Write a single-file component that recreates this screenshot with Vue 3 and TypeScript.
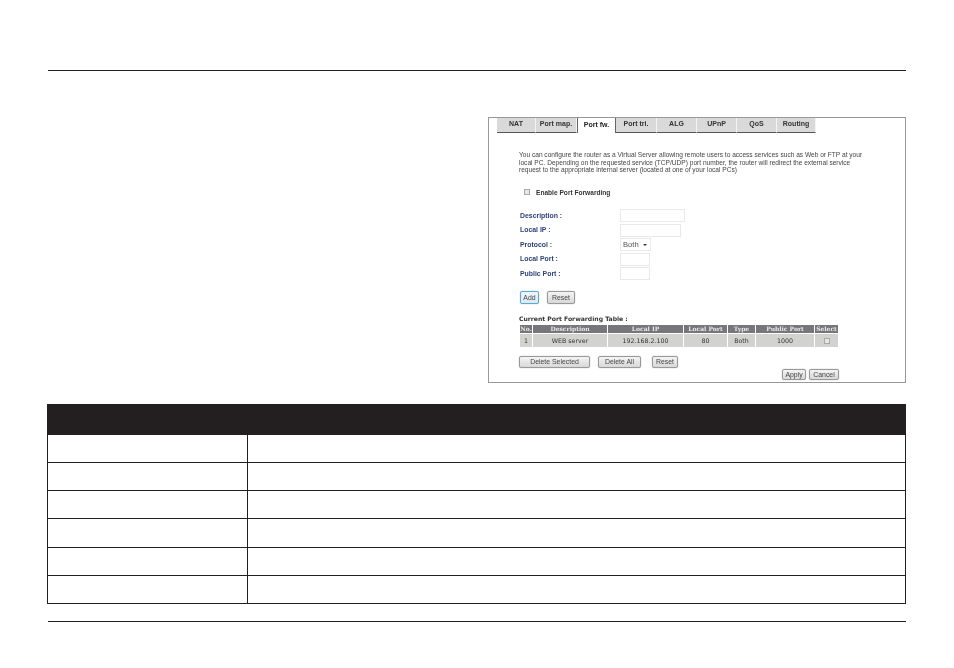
<script setup lang="ts">
const tabs: { label: string; width: number; active?: boolean }[] = [
  { label: 'NAT', width: 39 },
  { label: 'Port map.', width: 41 },
  { label: 'Port fw.', width: 39, active: true },
  { label: 'Port tri.', width: 41 },
  { label: 'ALG', width: 40 },
  { label: 'UPnP', width: 40 },
  { label: 'QoS', width: 40 },
  { label: 'Routing', width: 39 },
]
const fields = [
  { label: 'Description :', width: 65 },
  { label: 'Local IP :', width: 61 },
  { label: 'Protocol :', width: 0 },
  { label: 'Local Port :', width: 30 },
  { label: 'Public Port :', width: 30 },
]
const heads = ['No.', 'Description', 'Local IP', 'Local Port', 'Type', 'Public Port', 'Select']
const cells = ['1', 'WEB server', '192.168.2.100', '80', 'Both', '1000']
const specRows = [0, 1, 2, 3, 4, 5]
</script>

<template>
  <div class="page">
    <hr class="rule top-rule" />

    <div class="figure-row">
      <section class="shot">
        <div class="shot-inner">
          <nav class="tabs">
            <div
              v-for="t in tabs"
              :key="t.label"
              class="tab"
              :class="{ active: t.active }"
              :style="{ width: t.width + 'px' }"
            >{{ t.label }}</div>
          </nav>

          <p class="intro">You can configure the router as a Virtual Server allowing remote users to access services such as Web or FTP at your<br />local PC. Depending on the requested service (TCP/UDP) port number, the router will redirect the external service<br />request to the appropriate internal server (located at one of your local PCs)</p>

          <div class="enable">
            <span class="check"></span>
            <span class="enable-label">Enable Port Forwarding</span>
          </div>

          <div class="form">
            <div v-for="f in fields" :key="f.label" class="field">
              <span class="field-label">{{ f.label }}</span>
              <span v-if="f.width" class="input" :style="{ width: f.width + 'px' }"></span>
              <span v-else class="input select">Both<i class="caret"></i></span>
            </div>
          </div>

          <div class="form-buttons">
            <span class="btn add">Add</span>
            <span class="btn reset">Reset</span>
          </div>

          <h4 class="table-title">Current Port Forwarding Table :</h4>
          <table class="pf">
            <thead>
              <tr><th v-for="h in heads" :key="h">{{ h }}</th></tr>
            </thead>
            <tbody>
              <tr>
                <td v-for="c in cells" :key="c">{{ c }}</td>
                <td><span class="check small"></span></td>
              </tr>
            </tbody>
          </table>

          <div class="table-buttons">
            <span class="btn del-sel">Delete Selected</span>
            <span class="btn del-all">Delete All</span>
            <span class="btn reset2">Reset</span>
          </div>
          <div class="apply-row">
            <span class="btn apply">Apply</span>
            <span class="btn cancel">Cancel</span>
          </div>
        </div>
      </section>
    </div>

    <div class="spec">
      <div class="spec-head"></div>
      <div v-for="r in specRows" :key="r" class="spec-row">
        <div class="spec-key"></div>
        <div class="spec-val"></div>
      </div>
    </div>

    <hr class="rule bottom-rule" />
  </div>
</template>

<style scoped>
.page {
  width: 954px;
  height: 668px;
  overflow: hidden;
  padding-top: 70px;
  box-sizing: border-box;
  background: #fff;
  font-family: "Liberation Sans", Arial, sans-serif;
}
.rule {
  border: 0;
  height: 1px;
  margin: 0 48px;
  background: #231f20;
}
.figure-row {
  display: flex;
  justify-content: flex-end;
  padding: 46px 48px 0 0;
}
.shot {
  width: 418px;
  height: 266px;
  box-sizing: border-box;
  border: 1px solid #999;
  background: #fff;
  overflow: hidden;
}
.shot-inner {
  filter: blur(0.45px);
  height: 100%;
  color: #3a3a3a;
}
.tabs {
  display: flex;
  margin-left: 8px;
  height: 15px;
}
.tab {
  box-sizing: border-box;
  height: 15px;
  background: #d9d9d9;
  border-bottom: 1px solid #555;
  border-right: 1px solid #f4f4f4;
  font-size: 7px;
  font-weight: 700;
  color: #333;
  text-align: center;
  line-height: 11px;
}
.tab.active {
  height: 15px;
  background: #fff;
  border-bottom: 0;
  border-left: 1px solid #666;
  border-right: 1px solid #666;
  color: #222;
  line-height: 13px;
}
.intro {
  margin: 18px 0 0 30px;
  font-size: 6.58px;
  line-height: 7.6px;
  white-space: nowrap;
  color: #444;
}
.enable {
  display: flex;
  align-items: center;
  margin: 14.5px 0 0 35px;
  height: 8px;
}
.check {
  display: inline-block;
  box-sizing: border-box;
  width: 6px;
  height: 6px;
  border: 1px solid #aaa;
  background: #e6e6e6;
}
.check.small {
  vertical-align: middle;
}
.enable-label {
  margin-left: 6px;
  font-size: 6.6px;
  font-weight: 700;
  color: #333;
  white-space: nowrap;
}
.form {
  margin: 12.5px 0 0 31px;
}
.field {
  display: flex;
  align-items: center;
  height: 14.4px;
}
.field-label {
  width: 100px;
  padding-bottom: 1px;
  font-size: 6.9px;
  font-weight: 700;
  color: #2c3f78;
}
.input {
  box-sizing: border-box;
  height: 13px;
  border: 1px solid #e9e9e9;
  background: #fff;
}
.select {
  width: 31px;
  padding-left: 2px;
  font-size: 7.6px;
  line-height: 11px;
  color: #555;
  display: flex;
  align-items: center;
  gap: 4px;
}
.caret {
  width: 0;
  height: 0;
  border-left: 2px solid transparent;
  border-right: 2px solid transparent;
  border-top: 2px solid #333;
}
.form-buttons {
  display: flex;
  gap: 8px;
  margin: 10px 0 0 31px;
}
.btn {
  display: flex;
  align-items: center;
  justify-content: center;
  box-sizing: border-box;
  border: 1px solid #999;
  border-radius: 2px;
  background: linear-gradient(#f4f4f4, #d8d8d8);
  box-shadow: 0 0 1px #888;
  font-size: 6.9px;
  color: #444;
  white-space: nowrap;
}
.add {
  width: 19px;
  height: 13px;
  border-color: #5fa8cf;
  background: linear-gradient(#eef7fc, #d8e9f3);
}
.reset {
  width: 28px;
  height: 13px;
}
.table-title {
  margin: 10px 0 0 30px;
  font-family: "DejaVu Sans", sans-serif;
  font-size: 6.1px;
  line-height: 9px;
  font-weight: 700;
  color: #333;
}
.pf {
  margin: 1px 0 0 30px;
  width: 320px;
  table-layout: fixed;
  border-collapse: separate;
  border-spacing: 1px;
  font-family: "DejaVu Serif", serif;
}
.pf th {
  height: 8px;
  padding: 0;
  background: #77777b;
  color: #e9e9e9;
  font-size: 6px;
  line-height: 8px;
  font-weight: 700;
  text-align: center;
  white-space: nowrap;
  overflow: hidden;
}
.pf td {
  height: 13px;
  padding: 0;
  background: #d2d2d0;
  color: #333;
  font-family: "DejaVu Sans", sans-serif;
  font-size: 6.3px;
  text-align: center;
  white-space: nowrap;
}
.pf th:nth-child(1) { width: 12px; }
.pf th:nth-child(2) { width: 74px; }
.pf th:nth-child(3) { width: 75px; }
.pf th:nth-child(4) { width: 43px; }
.pf th:nth-child(5) { width: 27px; }
.pf th:nth-child(6) { width: 58px; }
.table-buttons {
  display: flex;
  margin: 8px 0 0 30px;
  height: 12px;
}
.del-sel { width: 71px; }
.del-all { width: 43px; margin-left: 8px; }
.reset2 { width: 26px; margin-left: 11px; }
.apply-row {
  display: flex;
  gap: 3px;
  margin: 1px 0 0 293px;
  height: 11px;
}
.apply { width: 24px; }
.cancel { width: 30px; }
.spec {
  margin: 21px 48px 0 47px;
  width: 859px;
  box-sizing: border-box;
}
.spec-head {
  height: 31px;
  background: #231f20;
}
.spec-row {
  display: flex;
  height: 28px;
  box-sizing: border-box;
  border-left: 1px solid #231f20;
  border-right: 1px solid #231f20;
  border-bottom: 1px solid #231f20;
}
.spec-row:nth-child(5) {
  height: 29px;
}
.spec-key {
  width: 199px;
  border-right: 1px solid #231f20;
}
.spec-val {
  flex: 1;
}
.bottom-rule {
  margin-top: 17px;
}
</style>
